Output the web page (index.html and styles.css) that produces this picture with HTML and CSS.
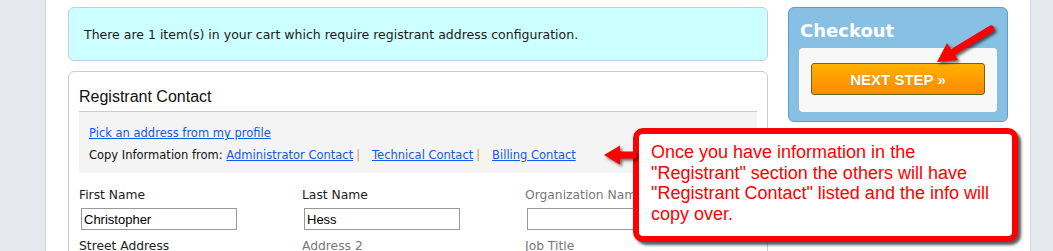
FILE: index.html
```html
<!DOCTYPE html>
<html lang="en">
<head>
<meta charset="utf-8">
<title>Checkout - Registrant Contact</title>
<link rel="stylesheet" href="styles.css">
</head>
<body>
<div class="page">
  <aside class="rail rail-left"></aside>
  <main class="main">
    <section class="content">
      <div class="notice">There are 1 item(s) in your cart which require registrant address configuration.</div>
      <div class="panel">
        <h2 class="panel-title">Registrant Contact</h2>
        <div class="copy-box">
          <div class="copy-line"><a href="#">Pick an address from my profile</a></div>
          <div class="copy-line">Copy Information from: <a href="#">Administrator Contact</a><span class="sep">|</span><a href="#">Technical Contact</a><span class="sep">|</span><a href="#">Billing Contact</a></div>
        </div>
        <div class="form-grid">
          <div class="field"><label class="lbl">First Name</label><input class="txt" type="text" value="Christopher"></div>
          <div class="field"><label class="lbl">Last Name</label><input class="txt" type="text" value="Hess"></div>
          <div class="field"><label class="lbl lbl-opt">Organization Name</label><input class="txt" type="text" value=""></div>
          <div class="field"><label class="lbl">Street Address</label><input class="txt" type="text" value=""></div>
          <div class="field"><label class="lbl lbl-opt">Address 2</label><input class="txt" type="text" value=""></div>
          <div class="field"><label class="lbl lbl-opt">Job Title</label><input class="txt" type="text" value=""></div>
        </div>
      </div>
    </section>
    <aside class="sidebar">
      <div class="checkout">
        <h3 class="checkout-title">Checkout</h3>
        <div class="checkout-inner">
          <button class="next-btn" type="button">NEXT STEP &raquo;</button>
        </div>
      </div>
    </aside>
  </main>
  <aside class="rail rail-right"></aside>

  <div class="callout">Once you have information in the "Registrant" section the others will have "Registrant Contact" listed and the info will copy over.</div>

  <svg class="arrows" width="1053" height="251" viewBox="0 0 1053 251" xmlns="http://www.w3.org/2000/svg">
    <polygon points="604,155 620,145.5 620,151.5 636,151.5 636,158.5 620,158.5 620,164.5" fill="#ff0000"/>
    <line x1="991" y1="29" x2="953" y2="52" stroke="#ff0000" stroke-width="7" stroke-linecap="round"/>
    <polygon points="937,62 958,60 947,43" fill="#ff0000"/>
  </svg>
</div>
</body>
</html>
```

FILE: styles.css
```css
html, body {
  margin: 0;
  padding: 0;
  background: #ffffff;
}

body {
  width: 1053px;
  height: 251px;
  overflow: hidden;
}

.page {
  position: relative;
  display: flex;
  height: 251px;
  overflow: hidden;
}

.rail {
  background: #e6eaee;
  flex: none;
}

.rail-left {
  width: 45px;
  border-right: 1px solid #cfd5db;
}

.rail-right {
  width: 22px;
  border-left: 1px solid #cfd5db;
}

.main {
  flex: none;
  width: 962px;
  padding: 7px 0 0 22px;
  display: flex;
  gap: 20px;
  align-items: flex-start;
}

.content {
  width: 700px;
  flex: none;
  display: flex;
  flex-direction: column;
  gap: 10px;
}

.notice {
  box-sizing: border-box;
  height: 54px;
  display: flex;
  align-items: center;
  padding-left: 15px;
  background: #ccffff;
  border: 1px solid #c9c6f2;
  border-radius: 6px;
  font-family: "DejaVu Sans", Verdana, sans-serif;
  font-size: 12.5px;
  color: #1a1a1a;
}

.panel {
  border: 1px solid #cccccc;
  border-radius: 6px;
  padding: 0 10px 40px 10px;
  height: 300px;
}

.panel-title {
  margin: 0;
  padding: 15px 0 4px 0;
  font-family: "Liberation Sans", Arial, sans-serif;
  font-weight: normal;
  font-size: 16px;
  line-height: 20px;
  color: #111111;
  border-bottom: 1px solid #cccccc;
}

.copy-box {
  background: #f4f4f4;
  padding: 10px 10px 7px 10px;
  font-family: "DejaVu Sans", Verdana, sans-serif;
  font-size: 11.5px;
  line-height: 22px;
  color: #111111;
}

.copy-box a {
  color: #1558e6;
  text-decoration: underline;
}

.sep {
  color: #e0954a;
  margin: 0 12px 0 3px;
}

.form-grid {
  display: grid;
  grid-template-columns: 223px 223px 223px;
  row-gap: 8px;
  margin-top: 14px;
}

.field {
  display: flex;
  flex-direction: column;
  align-items: flex-start;
}

.lbl {
  display: block;
  font-family: "DejaVu Sans", Verdana, sans-serif;
  font-size: 12.3px;
  line-height: 16px;
  color: #222222;
  margin-bottom: 5px;
}

.lbl-opt {
  color: #777777;
}

.txt {
  box-sizing: border-box;
  margin: 0 0 0 2px;
  width: 156px;
  height: 22px;
  border: 1px solid #999999;
  padding: 0 2px;
  font-family: "Liberation Sans", Arial, sans-serif;
  font-size: 13px;
  color: #000000;
  background: #ffffff;
}

.sidebar {
  width: 220px;
  flex: none;
}

.checkout {
  box-sizing: border-box;
  height: 115px;
  background: #88c0e4;
  border: 1px solid #5d9dd6;
  border-radius: 6px;
  padding: 12px 10px 0 10px;
}

.checkout-title {
  margin: 0 0 6px 0;
  padding-left: 1px;
  font-family: "DejaVu Sans", Verdana, sans-serif;
  font-weight: bold;
  font-size: 18px;
  line-height: 22px;
  color: #ffffff;
}

.checkout-inner {
  box-sizing: border-box;
  height: 64px;
  background: #f8f8f8;
  border-radius: 4px;
  padding: 15px 12px 0 12px;
}

.next-btn {
  box-sizing: border-box;
  display: block;
  width: 174px;
  height: 32px;
  border: 1px solid #5e6a1c;
  border-radius: 3px;
  background: linear-gradient(#ffb200, #ff8800);
  color: #ffffff;
  font-family: "Liberation Sans", Arial, sans-serif;
  font-weight: bold;
  font-size: 15px;
  padding: 0;
  text-shadow: 0 0 1px rgba(120, 60, 0, 0.4);
}

.callout {
  position: absolute;
  left: 633px;
  top: 128px;
  width: 385px;
  height: 114px;
  box-sizing: border-box;
  border: 6px solid #ff0000;
  border-radius: 10px;
  background: #ffffff;
  box-shadow: 3px 3px 3px rgba(0, 0, 0, 0.65);
  padding: 8px 10px 0 12px;
  font-family: "Liberation Sans", Arial, sans-serif;
  font-size: 18px;
  line-height: 20.7px;
  color: #ff0000;
}

.arrows {
  position: absolute;
  left: 0;
  top: 0;
  pointer-events: none;
  filter: drop-shadow(2px 2px 1.5px rgba(0, 0, 0, 0.6));
}
```
